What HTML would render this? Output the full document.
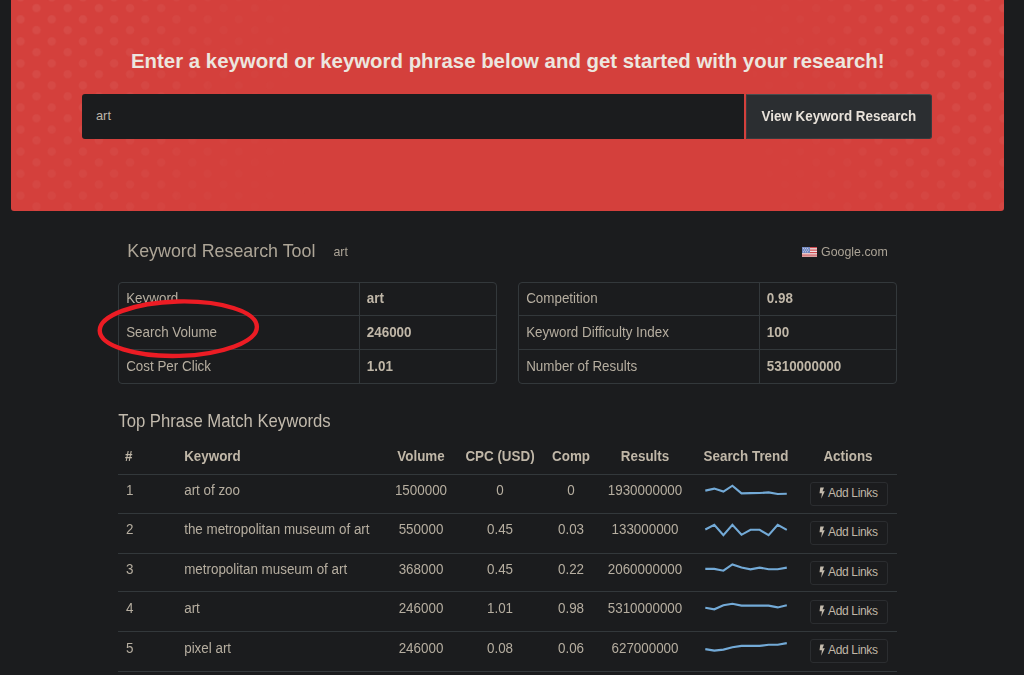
<!DOCTYPE html>
<html><head><meta charset="utf-8"><style>
html,body{margin:0;padding:0;}
body{width:1024px;height:675px;overflow:hidden;position:relative;background:#1b1c1e;font-family:"Liberation Sans",sans-serif;}
.t{position:absolute;white-space:nowrap;}
</style></head><body>
<div style="position:absolute;left:11px;top:-5px;width:993px;height:216px;background:#d4403c;border-radius:3px;"></div>
<div style="position:absolute;left:11px;top:-5px;width:993px;height:216px;border-radius:3px;background:radial-gradient(circle at 50% 50%, rgba(255,255,255,0.065) 0, rgba(255,255,255,0.065) 3.6px, rgba(255,255,255,0) 4.8px) 9.90px 2.07px / 31.2px 22.05px repeat, radial-gradient(circle at 50% 50%, rgba(255,255,255,0.065) 0, rgba(255,255,255,0.065) 3.6px, rgba(255,255,255,0) 4.8px) 25.10px 13.28px / 31.2px 22.05px repeat;-webkit-mask-image:linear-gradient(to right, #000 0px, rgba(0,0,0,.85) 110px, rgba(0,0,0,.3) 215px, rgba(0,0,0,0) 320px, rgba(0,0,0,0) 700px, rgba(0,0,0,.25) 800px, rgba(0,0,0,.8) 885px, #000 993px), linear-gradient(to bottom, #000 0px, rgba(0,0,0,.55) 216px);mask-image:linear-gradient(to right, #000 0px, rgba(0,0,0,.85) 110px, rgba(0,0,0,.3) 215px, rgba(0,0,0,0) 320px, rgba(0,0,0,0) 700px, rgba(0,0,0,.25) 800px, rgba(0,0,0,.8) 885px, #000 993px), linear-gradient(to bottom, #000 0px, rgba(0,0,0,.55) 216px);-webkit-mask-composite:source-in;mask-composite:intersect;"></div>
<div class="t" style="left:131.00px;top:49.83px;font-size:20.4px;line-height:23px;font-weight:700;color:#ece6df;">Enter a keyword or keyword phrase below and get started with your research!</div>
<div style="position:absolute;left:82px;top:94px;width:662px;height:45px;background:#1b1c1e;border-radius:3px 0 0 3px;"></div>
<div class="t" style="left:96.00px;top:108.26px;font-size:12.8px;line-height:15px;font-weight:400;color:#bdb5a8;">art</div>
<div style="position:absolute;left:746px;top:94px;width:186px;height:45px;background:#2b2e31;border:1px solid #383b3e;border-top-color:#4a4c4e;box-sizing:border-box;border-radius:0 3px 3px 0;"></div>
<div class="t" style="left:761.60px;top:108.86px;font-size:13.4px;line-height:15px;font-weight:700;color:#e8e2da;transform:scaleY(1.08);transform-origin:0 12.14px;">View Keyword Research</div>
<div class="t" style="left:127.30px;top:240.71px;font-size:17.85px;line-height:21px;font-weight:400;color:#ada597;transform:scaleY(1.05);transform-origin:0 16.69px;">Keyword Research Tool</div>
<div class="t" style="left:333.40px;top:245.10px;font-size:12.4px;line-height:14px;font-weight:400;color:#aba396;transform:scaleY(1.1);transform-origin:0 11.30px;">art</div>
<svg style="position:absolute;left:802px;top:247px" width="15" height="10" viewBox="0 0 15 10">
<rect width="15" height="10" fill="#ece6e6"/>
<rect y="0" width="15" height="1.2" fill="#cf4a50"/><rect y="2.5" width="15" height="1.2" fill="#cf4a50"/>
<rect y="5" width="15" height="1.2" fill="#cf4a50"/><rect y="7.5" width="15" height="1.2" fill="#cf4a50"/><rect y="8.8" width="15" height="1.2" fill="#d8a0a0"/>
<rect width="8" height="6" fill="#7388c0"/>
<g fill="#dfe4f4"><circle cx="1.5" cy="1.2" r=".5"/><circle cx="3.5" cy="1.2" r=".5"/><circle cx="5.5" cy="1.2" r=".5"/><circle cx="2.5" cy="3" r=".5"/><circle cx="4.5" cy="3" r=".5"/><circle cx="6.5" cy="3" r=".5"/><circle cx="1.5" cy="4.8" r=".5"/><circle cx="3.5" cy="4.8" r=".5"/><circle cx="5.5" cy="4.8" r=".5"/></g></svg>
<div class="t" style="left:821.00px;top:245.10px;font-size:12.4px;line-height:14px;font-weight:400;color:#aba396;transform:scaleY(1.1);transform-origin:0 11.30px;">Google.com</div>
<div style="position:absolute;left:118px;top:282px;width:379px;height:102px;border:1px solid #33383b;box-sizing:border-box;border-radius:4px;"></div>
<div style="position:absolute;left:359px;top:282px;width:1px;height:102px;background:#33383b;"></div>
<div style="position:absolute;left:118px;top:315px;width:379px;height:1px;background:#33383b;"></div>
<div style="position:absolute;left:118px;top:349px;width:379px;height:1px;background:#33383b;"></div>
<div class="t" style="left:126.20px;top:290.66px;font-size:13.4px;line-height:15px;font-weight:400;color:#b6aea0;transform:scaleY(1.08);transform-origin:0 12.14px;">Keyword</div>
<div class="t" style="left:366.80px;top:290.66px;font-size:13.4px;line-height:15px;font-weight:700;color:#c0b7a8;transform:scaleY(1.08);transform-origin:0 12.14px;">art</div>
<div class="t" style="left:126.20px;top:324.56px;font-size:13.4px;line-height:15px;font-weight:400;color:#b6aea0;transform:scaleY(1.08);transform-origin:0 12.14px;">Search Volume</div>
<div class="t" style="left:366.80px;top:324.56px;font-size:13.4px;line-height:15px;font-weight:700;color:#c0b7a8;transform:scaleY(1.08);transform-origin:0 12.14px;">246000</div>
<div class="t" style="left:126.20px;top:358.56px;font-size:13.4px;line-height:15px;font-weight:400;color:#b6aea0;transform:scaleY(1.08);transform-origin:0 12.14px;">Cost Per Click</div>
<div class="t" style="left:366.80px;top:358.56px;font-size:13.4px;line-height:15px;font-weight:700;color:#c0b7a8;transform:scaleY(1.08);transform-origin:0 12.14px;">1.01</div>
<div style="position:absolute;left:518px;top:282px;width:379px;height:102px;border:1px solid #33383b;box-sizing:border-box;border-radius:4px;"></div>
<div style="position:absolute;left:759px;top:282px;width:1px;height:102px;background:#33383b;"></div>
<div style="position:absolute;left:518px;top:315px;width:379px;height:1px;background:#33383b;"></div>
<div style="position:absolute;left:518px;top:349px;width:379px;height:1px;background:#33383b;"></div>
<div class="t" style="left:526.20px;top:290.66px;font-size:13.4px;line-height:15px;font-weight:400;color:#b6aea0;transform:scaleY(1.08);transform-origin:0 12.14px;">Competition</div>
<div class="t" style="left:766.80px;top:290.66px;font-size:13.4px;line-height:15px;font-weight:700;color:#c0b7a8;transform:scaleY(1.08);transform-origin:0 12.14px;">0.98</div>
<div class="t" style="left:526.20px;top:324.56px;font-size:13.4px;line-height:15px;font-weight:400;color:#b6aea0;transform:scaleY(1.08);transform-origin:0 12.14px;">Keyword Difficulty Index</div>
<div class="t" style="left:766.80px;top:324.56px;font-size:13.4px;line-height:15px;font-weight:700;color:#c0b7a8;transform:scaleY(1.08);transform-origin:0 12.14px;">100</div>
<div class="t" style="left:526.20px;top:358.56px;font-size:13.4px;line-height:15px;font-weight:400;color:#b6aea0;transform:scaleY(1.08);transform-origin:0 12.14px;">Number of Results</div>
<div class="t" style="left:766.80px;top:358.56px;font-size:13.4px;line-height:15px;font-weight:700;color:#c0b7a8;transform:scaleY(1.08);transform-origin:0 12.14px;">5310000000</div>
<div class="t" style="left:118.30px;top:411.51px;font-size:16.7px;line-height:19px;font-weight:400;color:#c2baad;transform:scaleY(1.07);transform-origin:0 15.29px;">Top Phrase Match Keywords</div>
<div class="t" style="left:125.00px;top:448.76px;font-size:13.4px;line-height:15px;font-weight:700;color:#c0b7a8;transform:scaleY(1.08);transform-origin:0 12.14px;">#</div>
<div class="t" style="left:184.20px;top:448.76px;font-size:13.4px;line-height:15px;font-weight:700;color:#c0b7a8;transform:scaleY(1.08);transform-origin:0 12.14px;">Keyword</div>
<div class="t" style="left:321.00px;width:200px;text-align:center;top:448.76px;font-size:13.4px;line-height:15px;font-weight:700;color:#c0b7a8;transform:scaleY(1.08);transform-origin:0 12.14px;">Volume</div>
<div class="t" style="left:400.00px;width:200px;text-align:center;top:448.76px;font-size:13.4px;line-height:15px;font-weight:700;color:#c0b7a8;transform:scaleY(1.08);transform-origin:0 12.14px;">CPC (USD)</div>
<div class="t" style="left:471.00px;width:200px;text-align:center;top:448.76px;font-size:13.4px;line-height:15px;font-weight:700;color:#c0b7a8;transform:scaleY(1.08);transform-origin:0 12.14px;">Comp</div>
<div class="t" style="left:545.00px;width:200px;text-align:center;top:448.76px;font-size:13.4px;line-height:15px;font-weight:700;color:#c0b7a8;transform:scaleY(1.08);transform-origin:0 12.14px;">Results</div>
<div class="t" style="left:646.00px;width:200px;text-align:center;top:448.76px;font-size:13.4px;line-height:15px;font-weight:700;color:#c0b7a8;transform:scaleY(1.08);transform-origin:0 12.14px;">Search Trend</div>
<div class="t" style="left:748.00px;width:200px;text-align:center;top:448.76px;font-size:13.4px;line-height:15px;font-weight:700;color:#c0b7a8;transform:scaleY(1.08);transform-origin:0 12.14px;">Actions</div>
<div style="position:absolute;left:118px;top:474px;width:779px;height:1px;background:#33383b;"></div>
<div style="position:absolute;left:118px;top:513px;width:779px;height:1px;background:#33383b;"></div>
<div style="position:absolute;left:118px;top:553px;width:779px;height:1px;background:#33383b;"></div>
<div style="position:absolute;left:118px;top:591px;width:779px;height:1px;background:#33383b;"></div>
<div style="position:absolute;left:118px;top:631px;width:779px;height:1px;background:#33383b;"></div>
<div style="position:absolute;left:118px;top:671px;width:779px;height:1px;background:#33383b;"></div>
<div class="t" style="left:126.00px;top:482.96px;font-size:13.4px;line-height:15px;font-weight:400;color:#b6aea0;transform:scaleY(1.08);transform-origin:0 12.14px;">1</div>
<div class="t" style="left:184.20px;top:482.96px;font-size:13.4px;line-height:15px;font-weight:400;color:#b6aea0;transform:scaleY(1.08);transform-origin:0 12.14px;">art of zoo</div>
<div class="t" style="left:321.00px;width:200px;text-align:center;top:482.96px;font-size:13.4px;line-height:15px;font-weight:400;color:#b6aea0;transform:scaleY(1.08);transform-origin:0 12.14px;">1500000</div>
<div class="t" style="left:400.00px;width:200px;text-align:center;top:482.96px;font-size:13.4px;line-height:15px;font-weight:400;color:#b6aea0;transform:scaleY(1.08);transform-origin:0 12.14px;">0</div>
<div class="t" style="left:471.00px;width:200px;text-align:center;top:482.96px;font-size:13.4px;line-height:15px;font-weight:400;color:#b6aea0;transform:scaleY(1.08);transform-origin:0 12.14px;">0</div>
<div class="t" style="left:545.00px;width:200px;text-align:center;top:482.96px;font-size:13.4px;line-height:15px;font-weight:400;color:#b6aea0;transform:scaleY(1.08);transform-origin:0 12.14px;">1930000000</div>
<svg style="position:absolute;left:0;top:0" width="1024" height="675"><polyline points="705.3,490.6 714.3,488.6 723.4,491.6 732.4,485.7 741.5,493.4 750.5,493.1 759.6,493.0 768.6,492.4 777.7,494.0 786.8,493.7" fill="none" stroke="#73aad7" stroke-width="2.1" stroke-linejoin="miter"/></svg>
<div style="position:absolute;left:810px;top:482px;width:78px;height:24px;border:1px solid #2b2d30;box-sizing:border-box;border-radius:3px;background:#1b1c1e;"><svg width="78" height="24" viewBox="0 0 78 24" style="position:absolute;left:-1px;top:-1px"><path d="M10.3 5.5 L14.0 5.5 L12.5 9.2 L14.8 9.2 L11.2 16.8 L11.9 11.3 L9.5 11.3 Z" fill="#c4bbad"/></svg></div>
<div class="t" style="left:828.00px;top:486.04px;font-size:12px;line-height:14px;font-weight:400;color:#c0b7a8;letter-spacing:-0.34px;">Add Links</div>
<div class="t" style="left:126.00px;top:522.46px;font-size:13.4px;line-height:15px;font-weight:400;color:#b6aea0;transform:scaleY(1.08);transform-origin:0 12.14px;">2</div>
<div class="t" style="left:184.20px;top:522.46px;font-size:13.4px;line-height:15px;font-weight:400;color:#b6aea0;transform:scaleY(1.08);transform-origin:0 12.14px;">the metropolitan museum of art</div>
<div class="t" style="left:321.00px;width:200px;text-align:center;top:522.46px;font-size:13.4px;line-height:15px;font-weight:400;color:#b6aea0;transform:scaleY(1.08);transform-origin:0 12.14px;">550000</div>
<div class="t" style="left:400.00px;width:200px;text-align:center;top:522.46px;font-size:13.4px;line-height:15px;font-weight:400;color:#b6aea0;transform:scaleY(1.08);transform-origin:0 12.14px;">0.45</div>
<div class="t" style="left:471.00px;width:200px;text-align:center;top:522.46px;font-size:13.4px;line-height:15px;font-weight:400;color:#b6aea0;transform:scaleY(1.08);transform-origin:0 12.14px;">0.03</div>
<div class="t" style="left:545.00px;width:200px;text-align:center;top:522.46px;font-size:13.4px;line-height:15px;font-weight:400;color:#b6aea0;transform:scaleY(1.08);transform-origin:0 12.14px;">133000000</div>
<svg style="position:absolute;left:0;top:0" width="1024" height="675"><polyline points="705.3,529.5 714.3,524.8 723.4,535.2 732.4,524.8 741.5,534.8 750.5,529.8 759.6,529.8 768.6,535.2 777.7,524.8 786.8,529.8" fill="none" stroke="#73aad7" stroke-width="2.1" stroke-linejoin="miter"/></svg>
<div style="position:absolute;left:810px;top:521.4px;width:78px;height:24px;border:1px solid #2b2d30;box-sizing:border-box;border-radius:3px;background:#1b1c1e;"><svg width="78" height="24" viewBox="0 0 78 24" style="position:absolute;left:-1px;top:-1px"><path d="M10.3 5.5 L14.0 5.5 L12.5 9.2 L14.8 9.2 L11.2 16.8 L11.9 11.3 L9.5 11.3 Z" fill="#c4bbad"/></svg></div>
<div class="t" style="left:828.00px;top:525.44px;font-size:12px;line-height:14px;font-weight:400;color:#c0b7a8;letter-spacing:-0.34px;">Add Links</div>
<div class="t" style="left:126.00px;top:562.06px;font-size:13.4px;line-height:15px;font-weight:400;color:#b6aea0;transform:scaleY(1.08);transform-origin:0 12.14px;">3</div>
<div class="t" style="left:184.20px;top:562.06px;font-size:13.4px;line-height:15px;font-weight:400;color:#b6aea0;transform:scaleY(1.08);transform-origin:0 12.14px;">metropolitan museum of art</div>
<div class="t" style="left:321.00px;width:200px;text-align:center;top:562.06px;font-size:13.4px;line-height:15px;font-weight:400;color:#b6aea0;transform:scaleY(1.08);transform-origin:0 12.14px;">368000</div>
<div class="t" style="left:400.00px;width:200px;text-align:center;top:562.06px;font-size:13.4px;line-height:15px;font-weight:400;color:#b6aea0;transform:scaleY(1.08);transform-origin:0 12.14px;">0.45</div>
<div class="t" style="left:471.00px;width:200px;text-align:center;top:562.06px;font-size:13.4px;line-height:15px;font-weight:400;color:#b6aea0;transform:scaleY(1.08);transform-origin:0 12.14px;">0.22</div>
<div class="t" style="left:545.00px;width:200px;text-align:center;top:562.06px;font-size:13.4px;line-height:15px;font-weight:400;color:#b6aea0;transform:scaleY(1.08);transform-origin:0 12.14px;">2060000000</div>
<svg style="position:absolute;left:0;top:0" width="1024" height="675"><polyline points="705.3,568.9 714.3,568.9 723.4,570.7 732.4,564.4 741.5,567.6 750.5,569.4 759.6,567.6 768.6,569.3 777.7,569.3 786.8,567.6" fill="none" stroke="#73aad7" stroke-width="2.1" stroke-linejoin="miter"/></svg>
<div style="position:absolute;left:810px;top:560.8px;width:78px;height:24px;border:1px solid #2b2d30;box-sizing:border-box;border-radius:3px;background:#1b1c1e;"><svg width="78" height="24" viewBox="0 0 78 24" style="position:absolute;left:-1px;top:-1px"><path d="M10.3 5.5 L14.0 5.5 L12.5 9.2 L14.8 9.2 L11.2 16.8 L11.9 11.3 L9.5 11.3 Z" fill="#c4bbad"/></svg></div>
<div class="t" style="left:828.00px;top:564.84px;font-size:12px;line-height:14px;font-weight:400;color:#c0b7a8;letter-spacing:-0.34px;">Add Links</div>
<div class="t" style="left:126.00px;top:601.46px;font-size:13.4px;line-height:15px;font-weight:400;color:#b6aea0;transform:scaleY(1.08);transform-origin:0 12.14px;">4</div>
<div class="t" style="left:184.20px;top:601.46px;font-size:13.4px;line-height:15px;font-weight:400;color:#b6aea0;transform:scaleY(1.08);transform-origin:0 12.14px;">art</div>
<div class="t" style="left:321.00px;width:200px;text-align:center;top:601.46px;font-size:13.4px;line-height:15px;font-weight:400;color:#b6aea0;transform:scaleY(1.08);transform-origin:0 12.14px;">246000</div>
<div class="t" style="left:400.00px;width:200px;text-align:center;top:601.46px;font-size:13.4px;line-height:15px;font-weight:400;color:#b6aea0;transform:scaleY(1.08);transform-origin:0 12.14px;">1.01</div>
<div class="t" style="left:471.00px;width:200px;text-align:center;top:601.46px;font-size:13.4px;line-height:15px;font-weight:400;color:#b6aea0;transform:scaleY(1.08);transform-origin:0 12.14px;">0.98</div>
<div class="t" style="left:545.00px;width:200px;text-align:center;top:601.46px;font-size:13.4px;line-height:15px;font-weight:400;color:#b6aea0;transform:scaleY(1.08);transform-origin:0 12.14px;">5310000000</div>
<svg style="position:absolute;left:0;top:0" width="1024" height="675"><polyline points="705.3,607.8 714.3,609.3 723.4,605.2 732.4,603.7 741.5,605.6 750.5,605.6 759.6,605.6 768.6,605.6 777.7,607.4 786.8,605.2" fill="none" stroke="#73aad7" stroke-width="2.1" stroke-linejoin="miter"/></svg>
<div style="position:absolute;left:810px;top:599.5px;width:78px;height:24px;border:1px solid #2b2d30;box-sizing:border-box;border-radius:3px;background:#1b1c1e;"><svg width="78" height="24" viewBox="0 0 78 24" style="position:absolute;left:-1px;top:-1px"><path d="M10.3 5.5 L14.0 5.5 L12.5 9.2 L14.8 9.2 L11.2 16.8 L11.9 11.3 L9.5 11.3 Z" fill="#c4bbad"/></svg></div>
<div class="t" style="left:828.00px;top:603.54px;font-size:12px;line-height:14px;font-weight:400;color:#c0b7a8;letter-spacing:-0.34px;">Add Links</div>
<div class="t" style="left:126.00px;top:640.76px;font-size:13.4px;line-height:15px;font-weight:400;color:#b6aea0;transform:scaleY(1.08);transform-origin:0 12.14px;">5</div>
<div class="t" style="left:184.20px;top:640.76px;font-size:13.4px;line-height:15px;font-weight:400;color:#b6aea0;transform:scaleY(1.08);transform-origin:0 12.14px;">pixel art</div>
<div class="t" style="left:321.00px;width:200px;text-align:center;top:640.76px;font-size:13.4px;line-height:15px;font-weight:400;color:#b6aea0;transform:scaleY(1.08);transform-origin:0 12.14px;">246000</div>
<div class="t" style="left:400.00px;width:200px;text-align:center;top:640.76px;font-size:13.4px;line-height:15px;font-weight:400;color:#b6aea0;transform:scaleY(1.08);transform-origin:0 12.14px;">0.08</div>
<div class="t" style="left:471.00px;width:200px;text-align:center;top:640.76px;font-size:13.4px;line-height:15px;font-weight:400;color:#b6aea0;transform:scaleY(1.08);transform-origin:0 12.14px;">0.06</div>
<div class="t" style="left:545.00px;width:200px;text-align:center;top:640.76px;font-size:13.4px;line-height:15px;font-weight:400;color:#b6aea0;transform:scaleY(1.08);transform-origin:0 12.14px;">627000000</div>
<svg style="position:absolute;left:0;top:0" width="1024" height="675"><polyline points="705.3,649.1 714.3,650.6 723.4,649.6 732.4,647.2 741.5,645.9 750.5,645.9 759.6,645.9 768.6,644.8 777.7,644.8 786.8,643.1" fill="none" stroke="#73aad7" stroke-width="2.1" stroke-linejoin="miter"/></svg>
<div style="position:absolute;left:810px;top:639px;width:78px;height:24px;border:1px solid #2b2d30;box-sizing:border-box;border-radius:3px;background:#1b1c1e;"><svg width="78" height="24" viewBox="0 0 78 24" style="position:absolute;left:-1px;top:-1px"><path d="M10.3 5.5 L14.0 5.5 L12.5 9.2 L14.8 9.2 L11.2 16.8 L11.9 11.3 L9.5 11.3 Z" fill="#c4bbad"/></svg></div>
<div class="t" style="left:828.00px;top:643.04px;font-size:12px;line-height:14px;font-weight:400;color:#c0b7a8;letter-spacing:-0.34px;">Add Links</div>
<svg style="position:absolute;left:0;top:0" width="1024" height="675"><ellipse cx="178.3" cy="328.7" rx="78.6" ry="27.2" fill="none" stroke="#ec1c24" stroke-width="4.4" transform="rotate(-1.5 178.3 328.7)"/></svg>
</body></html>
